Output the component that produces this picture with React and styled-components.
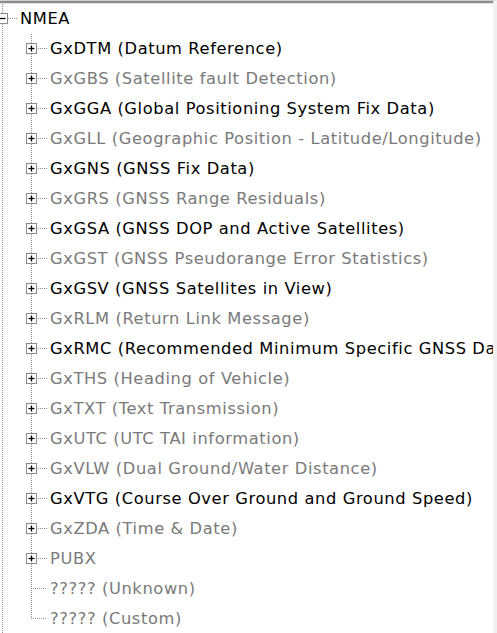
import React from "react";
import styled, { createGlobalStyle } from "styled-components";

const GlobalStyle = createGlobalStyle`
  html, body {
    margin: 0;
    padding: 0;
    background: #ffffff;
  }
  body {
    font-family: "DejaVu Sans", "Noto Sans", sans-serif;
  }
`;

const Panel = styled.div`
  width: 497px;
  height: 633px;
  box-sizing: border-box;
  background: #ffffff;
  border-top: 1px solid #d0d0d0;
  border-right: 4px solid #f0f0f0;
  overflow: hidden;
  display: flex;
  flex-direction: column;
`;

const TopEdge = styled.div`
  height: 3px;
  flex-shrink: 0;
  background: linear-gradient(#8c8c8c 0, #8c8c8c 2px, #e2e2e2 2px);
`;

const TreeList = styled.ul`
  list-style: none;
  margin: 0;
  padding: 0;
  display: flex;
  flex-direction: column;
`;

const Row = styled.li`
  height: 30px;
  display: flex;
  align-items: center;
  white-space: nowrap;
`;

const Gutter = styled.svg`
  flex-shrink: 0;
  display: block;
  margin-right: ${(p) => p.$gap}px;
`;

const Label = styled.span`
  font-size: 16.3px;
  letter-spacing: 0.6px;
  color: ${(p) => (p.$active ? "#000000" : "#7a7a7a")};
  line-height: 30px;
`;

const messages = [
  { name: "GxDTM", desc: "Datum Reference", active: true },
  { name: "GxGBS", desc: "Satellite fault Detection" },
  { name: "GxGGA", desc: "Global Positioning System Fix Data", active: true },
  { name: "GxGLL", desc: "Geographic Position - Latitude/Longitude" },
  { name: "GxGNS", desc: "GNSS Fix Data", active: true },
  { name: "GxGRS", desc: "GNSS Range Residuals" },
  { name: "GxGSA", desc: "GNSS DOP and Active Satellites", active: true },
  { name: "GxGST", desc: "GNSS Pseudorange Error Statistics" },
  { name: "GxGSV", desc: "GNSS Satellites in View", active: true },
  { name: "GxRLM", desc: "Return Link Message" },
  { name: "GxRMC", desc: "Recommended Minimum Specific GNSS Data", active: true },
  { name: "GxTHS", desc: "Heading of Vehicle" },
  { name: "GxTXT", desc: "Text Transmission" },
  { name: "GxUTC", desc: "UTC TAI information" },
  { name: "GxVLW", desc: "Dual Ground/Water Distance" },
  { name: "GxVTG", desc: "Course Over Ground and Ground Speed", active: true },
  { name: "GxZDA", desc: "Time & Date" },
  { name: "PUBX" },
  { name: "?????", desc: "Unknown", leaf: true },
  { name: "?????", desc: "Custom", leaf: true },
];

const LINE = "#8f8f8f";
const BOX = "#8a8a8a";

// expand box, pixel-aligned, cx/cy are the centre pixel
const ExpandBox = ({ cx, cy, open }) => (
  <g>
    <rect x={cx - 4.5} y={cy - 4.5} width="10" height="10" fill="#fff" stroke={BOX} strokeWidth="1" />
    <line x1={cx - 2.5} y1={cy + 0.5} x2={cx + 3.5} y2={cy + 0.5} stroke="#000" strokeWidth="1.3" />
    {!open && <line x1={cx + 0.5} y1={cy - 2.5} x2={cx + 0.5} y2={cy + 3.5} stroke="#000" strokeWidth="1.3" />}
  </g>
);

const Dots = (props) => (
  <line stroke={LINE} strokeWidth="1" strokeDasharray="1 1" {...props} />
);

const RootLines = () => (
  <Gutter width="18" height="30" $gap={2}>
    <Dots x1="2.5" y1="0" x2="2.5" y2="30" />
    <Dots x1="8" y1="14.5" x2="18" y2="14.5" />
    <ExpandBox cx={2} cy={14} open />
  </Gutter>
);

const ChildLines = ({ last, leaf }) => (
  <Gutter width="48" height="30" $gap={2}>
    <Dots x1="2.5" y1="0" x2="2.5" y2="30" />
    <Dots x1="31.5" y1="0" x2="31.5" y2={last ? 15 : 30} />
    <Dots x1={leaf ? 33 : 38} y1="14.5" x2="47" y2="14.5" />
    {!leaf && <ExpandBox cx={31} cy={14} />}
  </Gutter>
);

export default function App() {
  return (
    <>
      <GlobalStyle />
      <Panel>
        <TopEdge />
        <TreeList>
          <Row>
            <RootLines />
            <Label $active>NMEA</Label>
          </Row>
          {messages.map((m, i) => (
            <Row key={i}>
              <ChildLines last={i === messages.length - 1} leaf={m.leaf} />
              <Label $active={m.active}>
                {m.desc ? `${m.name} (${m.desc})` : m.name}
              </Label>
            </Row>
          ))}
        </TreeList>
      </Panel>
    </>
  );
}
